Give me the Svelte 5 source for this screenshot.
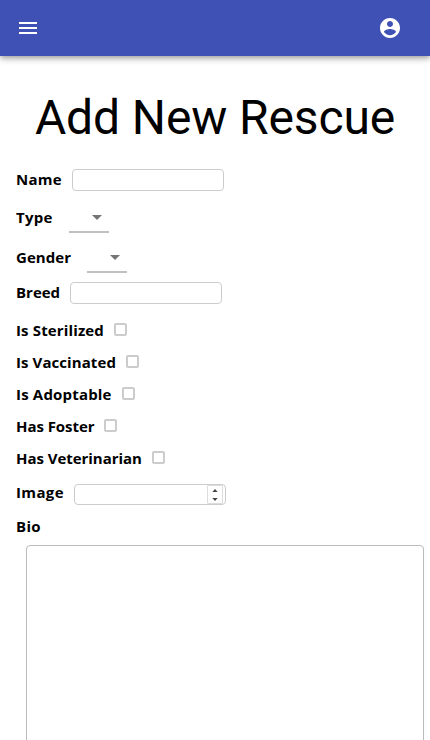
<script>
  const fields = [
    { label: 'Name', kind: 'text', height: 34, width: 46, spacing: 0.25 },
    { label: 'Type', kind: 'select', height: 40, width: 37, spacing: 0.3 },
    { label: 'Gender', kind: 'select', height: 40, width: 55, spacing: 0.05 },
    { label: 'Breed', kind: 'text', height: 32, width: 44, spacing: 0 },
    { label: 'Is Sterilized', kind: 'check', height: 32, width: 88, spacing: 0.14 },
    { label: 'Is Vaccinated', kind: 'check', height: 32, width: 100, spacing: 0.08 },
    { label: 'Is Adoptable', kind: 'check', height: 32, width: 96, spacing: 0.18 },
    { label: 'Has Foster', kind: 'check', height: 32, width: 78, spacing: -0.05 },
    { label: 'Has Veterinarian', kind: 'check', height: 32, width: 126, spacing: -0.04 },
    { label: 'Image', kind: 'number', height: 40, width: 48, spacing: 0.35 },
    { label: 'Bio', kind: 'none', height: 31, width: 25, spacing: 0.3 }
  ];
</script>

<div class="screen">
  <header>
    <button aria-label="Menu">
      <svg width="24" height="24" viewBox="0 0 24 24"><path fill="currentColor" d="M3 18h18v-2H3v2zm0-5h18v-2H3v2zm0-7v2h18V6H3z" /></svg>
    </button>
    <button aria-label="Account">
      <svg width="24" height="24" viewBox="0 0 24 24"><path fill="currentColor" d="M12 2C6.48 2 2 6.48 2 12s4.480 10 10 10 10-4.480 10-10S17.520 2 12 2zm0 3c1.660 0 3 1.340 3 3s-1.340 3-3 3-3-1.340-3-3 1.340-3 3-3zm0 14.200c-2.500 0-4.710-1.280-6-3.220.030-1.990 4-3.080 6-3.080 1.990 0 5.970 1.090 6 3.080-1.290 1.940-3.500 3.220-6 3.220z" /></svg>
    </button>
  </header>
  <main>
    <h1>Add New Rescue</h1>
    <form>
      {#each fields as field}
        <div class="row {field.kind}" class:last-input={field.label === 'Breed'} style:height="{field.height}px">
          <span class="label" style:width="{field.width}px" style:letter-spacing="{field.spacing}px">{field.label}</span>
          {#if field.kind === 'text'}
            <input class="box" aria-label={field.label} />
          {:else if field.kind === 'select'}
            <div class="picker"><svg width="24" height="24" viewBox="0 0 24 24"><path d="M7 10l5 5 5-5z" fill="#757575" /></svg></div>
          {:else if field.kind === 'check'}
            <i class="tick"></i>
          {:else if field.kind === 'number'}
            <div class="box spin">
              <div class="arrows">
                <svg width="14" height="18" viewBox="0 0 14 18"><path d="M4.300 6L7 3L9.700 6zM4.300 12L7 15L9.700 12z" fill="#444" /></svg>
              </div>
            </div>
          {/if}
        </div>
      {/each}
      <textarea aria-label="Bio"></textarea>
    </form>
  </main>
</div>

<style>
  .screen {
    height: 740px;
    overflow: hidden;
    background: #fff;
    color: #000;
    font-family: "Open Sans", "Noto Sans", sans-serif;
  }
  header {
    position: relative;
    box-sizing: border-box;
    height: 56px;
    padding: 0 28px 0 16px;
    display: flex;
    align-items: center;
    justify-content: space-between;
    background: #3f51b5;
    color: #fff;
    box-shadow: 0 2px 4px -1px rgba(0, 0, 0, 0.2), 0 4px 5px rgba(0, 0, 0, 0.14), 0 1px 10px rgba(0, 0, 0, 0.12);
  }
  button {
    display: flex;
    padding: 0;
    border: 0;
    background: none;
    color: inherit;
  }
  h1 {
    margin: 0;
    padding-top: 34px;
    height: 73px;
    font: 400 48px/56px Roboto, sans-serif;
    letter-spacing: -0.12px;
    text-align: center;
  }
  .row {
    display: flex;
    align-items: center;
    padding-left: 16px;
  }
  .last-input {
    margin-bottom: 5px;
  }
  .label {
    font-size: 15px;
    font-weight: 700;
    line-height: 20px;
    white-space: nowrap;
  }
  .text .label {
    padding-bottom: 2px;
  }
  .number .label {
    padding-bottom: 4px;
  }
  .none .label {
    padding-bottom: 7px;
  }
  .box {
    box-sizing: border-box;
    width: 152px;
    height: 22px;
    margin: 0 0 0 10px;
    padding: 0;
    border: 1px solid #ccc;
    border-radius: 4px;
    background: #fff;
  }
  .number .box {
    height: 21px;
  }
  .picker {
    box-sizing: border-box;
    width: 40px;
    height: 32px;
    margin: 0 0 1px 16px;
    padding: 4px 0 0 16px;
    border-bottom: 2px solid #c0c0c0;
  }
  .picker svg {
    display: block;
  }
  .tick {
    box-sizing: border-box;
    width: 13px;
    height: 13px;
    margin: 0 0 2px 10px;
    border: 2px solid #ccc;
    border-radius: 2px;
  }
  .spin {
    display: flex;
    justify-content: flex-end;
    padding-right: 2px;
  }
  .arrows {
    box-sizing: border-box;
    height: 19px;
    border: 1px solid #ddd;
    border-radius: 1px;
  }
  .arrows svg {
    display: block;
  }
  textarea {
    display: block;
    box-sizing: border-box;
    width: 398px;
    height: 300px;
    margin: 0 0 0 26px;
    border: 1px solid #bbb;
    border-radius: 4px;
    resize: none;
  }
</style>
